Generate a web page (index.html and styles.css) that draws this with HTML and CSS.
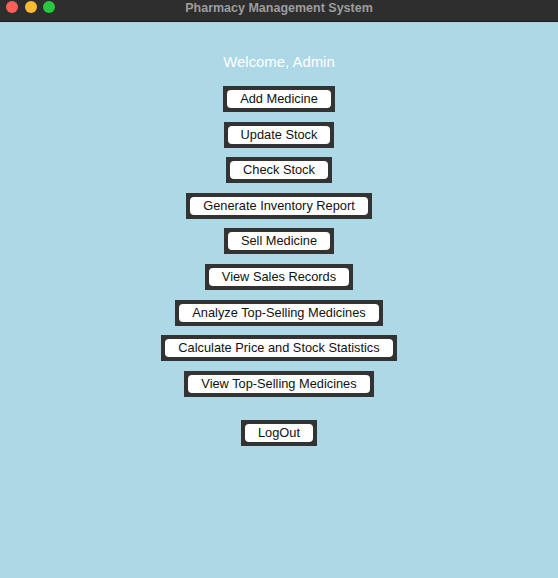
FILE: index.html
```html
<!DOCTYPE html>
<html>
<head>
<meta charset="utf-8">
<link rel="stylesheet" href="styles.css">
</head>
<body>
<div class="window">
  <div class="titlebar">
    <div class="lights">
      <span class="light red"></span>
      <span class="light yellow"></span>
      <span class="light green"></span>
    </div>
    <div class="title">Pharmacy Management System</div>
  </div>
  <div class="content">
    <div class="welcome">Welcome, Admin</div>
    <div class="menu">
      <div class="frame"><button class="btn">Add Medicine</button></div>
      <div class="frame"><button class="btn">Update Stock</button></div>
      <div class="frame"><button class="btn">Check Stock</button></div>
      <div class="frame"><button class="btn">Generate Inventory Report</button></div>
      <div class="frame"><button class="btn">Sell Medicine</button></div>
      <div class="frame"><button class="btn">View Sales Records</button></div>
      <div class="frame"><button class="btn">Analyze Top-Selling Medicines</button></div>
      <div class="frame"><button class="btn">Calculate Price and Stock Statistics</button></div>
      <div class="frame"><button class="btn">View Top-Selling Medicines</button></div>
    </div>
    <div class="frame logout"><button class="btn">LogOut</button></div>
  </div>
</div>
</body>
</html>
```
FILE: styles.css
```css
html, body {
  margin: 0;
  padding: 0;
  width: 558px;
  height: 578px;
  overflow: hidden;
  font-family: "Liberation Sans", Arial, sans-serif;
}
.window {
  width: 558px;
  height: 578px;
  background: #add8e6;
  display: flex;
  flex-direction: column;
}
.titlebar {
  height: 21px;
  background: #2e2e2e;
  border-bottom: 1px solid #1c1c1c;
  position: relative;
  display: flex;
  align-items: center;
  justify-content: center;
}
.lights {
  position: absolute;
  left: 6px;
  top: 1px;
  display: flex;
  gap: 6.5px;
}
.light {
  width: 12px;
  height: 12px;
  border-radius: 50%;
  display: block;
}
.red { background: #fe5f57; }
.yellow { background: #febc2e; }
.green { background: #28c840; }
.title {
  color: #9d9d9d;
  font-weight: bold;
  font-size: 12.5px;
  margin-top: -5px;
}
.content {
  display: flex;
  flex-direction: column;
  align-items: center;
  padding-top: 32px;
}
.welcome {
  color: #ffffff;
  font-size: 14.9px;
  line-height: 17px;
  height: 17px;
  margin-bottom: 15px;
}
.menu {
  display: flex;
  flex-direction: column;
  align-items: center;
  gap: 9.6px;
}
.frame {
  background: #333333;
  padding: 4px;
  display: flex;
  height: 18px;
}
.btn {
  background: #ffffff;
  border: none;
  border-radius: 4px;
  height: 18px;
  line-height: 18px;
  padding: 0 13px;
  font-family: "Liberation Sans", Arial, sans-serif;
  font-size: 12.8px;
  color: #111111;
  margin: 0;
}
.logout {
  margin-top: 23px;
}
```
